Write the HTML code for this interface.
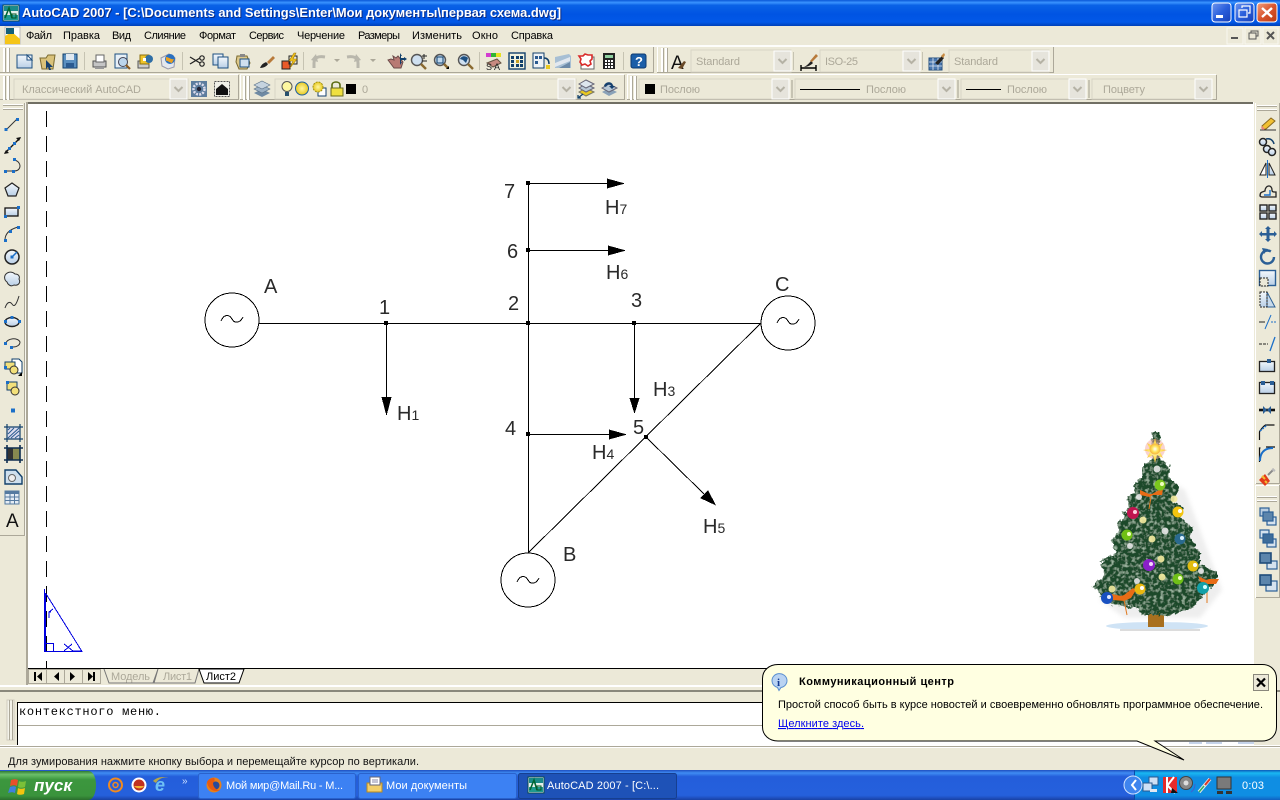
<!DOCTYPE html>
<html lang="ru">
<head>
<meta charset="utf-8">
<title>AutoCAD 2007</title>
<style>
html,body{margin:0;padding:0;width:1280px;height:800px;overflow:hidden;background:#ece9d8}
svg{display:block;position:absolute;left:0;top:0}
text{font-family:"Liberation Sans","DejaVu Sans",sans-serif;font-size:11px}
.g{fill:#aca899}
.m{fill:#000}
.d{font-size:20px;fill:#2a2a2a}
.d tspan{font-size:14px}
</style>
</head>
<body>
<svg width="1280" height="800" viewBox="0 0 1280 800" xmlns="http://www.w3.org/2000/svg">
<defs>
<linearGradient id="title" x1="0" y1="0" x2="0" y2="1">
<stop offset="0" stop-color="#0a58d8"/><stop offset=".1" stop-color="#3a93ff"/><stop offset=".2" stop-color="#0a62e6"/><stop offset=".55" stop-color="#0054e3"/><stop offset=".85" stop-color="#0258e8"/><stop offset="1" stop-color="#0040b8"/>
</linearGradient>
<linearGradient id="task" x1="0" y1="0" x2="0" y2="1">
<stop offset="0" stop-color="#1f4fc0"/><stop offset=".1" stop-color="#3f8cf3"/><stop offset=".22" stop-color="#245edb"/><stop offset=".85" stop-color="#2560dc"/><stop offset="1" stop-color="#1941a5"/>
</linearGradient>
<linearGradient id="tray" x1="0" y1="0" x2="0" y2="1">
<stop offset="0" stop-color="#0c59b9"/><stop offset=".1" stop-color="#19b8f2"/><stop offset=".25" stop-color="#0f8ee3"/><stop offset=".85" stop-color="#0f8ee3"/><stop offset="1" stop-color="#1060c0"/>
</linearGradient>
<linearGradient id="start" x1="0" y1="0" x2="0" y2="1">
<stop offset="0" stop-color="#2f7a33"/><stop offset=".12" stop-color="#6cbf6a"/><stop offset=".3" stop-color="#3c973e"/><stop offset=".85" stop-color="#3a933c"/><stop offset="1" stop-color="#2a6e2c"/>
</linearGradient>
<linearGradient id="xb" x1="0" y1="0" x2="1" y2="1">
<stop offset="0" stop-color="#6f95ee"/><stop offset=".5" stop-color="#2a5fdc"/><stop offset="1" stop-color="#1640b8"/>
</linearGradient>
<linearGradient id="xc" x1="0" y1="0" x2="1" y2="1">
<stop offset="0" stop-color="#f0a080"/><stop offset=".5" stop-color="#d9552e"/><stop offset="1" stop-color="#b93a12"/>
</linearGradient>
<linearGradient id="ice" x1="0" y1="0" x2="0" y2="1">
<stop offset="0" stop-color="#f4f8fc"/><stop offset="1" stop-color="#b9cfe6"/>
</linearGradient>
<radialGradient id="gold"><stop offset="0" stop-color="#fff7a0"/><stop offset="1" stop-color="#e8c820"/></radialGradient>
<radialGradient id="starg"><stop offset="0" stop-color="#fff"/><stop offset=".55" stop-color="#ffe45a"/><stop offset="1" stop-color="#f6b040"/></radialGradient>
<filter id="tex" x="-8%" y="-8%" width="116%" height="116%">
<feTurbulence type="fractalNoise" baseFrequency=".28" numOctaves="2" seed="4" result="n"/>
<feDisplacementMap in="SourceGraphic" in2="n" scale="7" xChannelSelector="R" yChannelSelector="G" result="d"/>
<feColorMatrix in="n" type="matrix" values="0 0 0 0 .42  0 0 0 0 .58  0 0 0 0 .44  2.4 0 0 0 -1.15" result="c"/>
<feComposite in="c" in2="d" operator="in" result="t"/>
<feMerge><feMergeNode in="d"/><feMergeNode in="t"/></feMerge>
</filter>
<filter id="bl"><feGaussianBlur stdDeviation="2"/></filter>
<g id="hv"><rect x="0" y="0" width="2" height="24" fill="#fff"/><rect x="2" y="0" width="1" height="24" fill="#aca899"/><rect x="4" y="0" width="2" height="24" fill="#fff"/><rect x="6" y="0" width="1" height="24" fill="#aca899"/></g>
<g id="hh"><rect x="0" y="0" width="20" height="1" fill="#fff"/><rect x="0" y="1" width="20" height="1" fill="#aca899"/><rect x="0" y="4" width="20" height="1" fill="#fff"/><rect x="0" y="5" width="20" height="1" fill="#aca899"/></g>
<g id="cb"><rect x="0" y="0" width="17" height="20" fill="#e6e4dc" stroke="#fff"/><path d="M4.500 8l4 4 4-4" fill="none" stroke="#b5b2a5" stroke-width="2"/></g>
</defs>

<!-- Title bar -->
<rect x="0" y="0" width="1280" height="26" fill="url(#title)"/>
<g transform="translate(3,5)">
<rect width="16" height="16" fill="#e4f0ec" stroke="#0a4a50"/><rect x="1" y="1" width="14" height="5" fill="#1a8a88"/><rect x="1" y="10" width="14" height="5" fill="#1f9a8f"/>
<path d="M2 13L6 3l3 10" fill="none" stroke="#063" stroke-width="1.600"/><rect x="9" y="9" width="4" height="4" fill="none" stroke="#052"/>
</g>
<text x="23" y="18" textLength="539" lengthAdjust="spacingAndGlyphs" font-weight="700" style="font-size:13px" fill="#0a2a80">AutoCAD 2007 - [C:\Documents and Settings\Enter\Мои документы\первая схема.dwg]</text>
<text x="22" y="17" textLength="539" lengthAdjust="spacingAndGlyphs" font-weight="700" style="font-size:13px" fill="#fff">AutoCAD 2007 - [C:\Documents and Settings\Enter\Мои документы\первая схема.dwg]</text>
<rect x="1212" y="3" width="19" height="19" rx="3" fill="url(#xb)" stroke="#fff"/><rect x="1216" y="15" width="7" height="3" fill="#fff"/>
<rect x="1235" y="3" width="19" height="19" rx="3" fill="url(#xb)" stroke="#fff"/><rect x="1239" y="10" width="8" height="7" fill="none" stroke="#fff" stroke-width="1.200"/><path d="M1242 8V6h8v7h-2" fill="none" stroke="#fff" stroke-width="1.200"/>
<rect x="1257" y="3" width="20" height="19" rx="3" fill="url(#xc)" stroke="#fff"/><path d="M1262 8l10 9M1272 8l-10 9" stroke="#fff" stroke-width="2.400"/>

<!-- Menu -->
<rect x="0" y="26" width="1280" height="19" fill="#ece9d8"/>
<g transform="translate(4,26)">
<rect x="1" y="1" width="15" height="17" fill="#fff" stroke="#bbb"/><path d="M1 18V10L8 6l8 7v5z" fill="#f5c518"/><rect x="2" y="2" width="8" height="6" fill="#14607a"/>
</g>
<g class="m">
<text x="26" y="39" textLength="26" class="m">Файл</text>
<text x="63" y="39" textLength="37" class="m">Правка</text>
<text x="112" y="39" textLength="19" class="m">Вид</text>
<text x="144" y="39" textLength="42" class="m">Слияние</text>
<text x="199" y="39" textLength="37" class="m">Формат</text>
<text x="249" y="39" textLength="35" class="m">Сервис</text>
<text x="297" y="39" textLength="48" class="m">Черчение</text>
<text x="358" y="39" textLength="42" class="m">Размеры</text>
<text x="412" y="39" textLength="50" class="m">Изменить</text>
<text x="472" y="39" textLength="26" class="m">Окно</text>
<text x="511" y="39" textLength="42" class="m">Справка</text>
</g>
<rect x="1227" y="28" width="16" height="16" fill="#ece9d8" stroke="#f8f7f0"/><rect x="1231" y="37" width="7" height="2" fill="#555"/>
<rect x="1245" y="28" width="16" height="16" fill="#ece9d8" stroke="#f8f7f0"/><rect x="1249" y="33" width="7" height="6" fill="none" stroke="#555"/><path d="M1251 33v-2h7v5h-2" fill="none" stroke="#555"/>
<rect x="1263" y="28" width="15" height="16" fill="#ece9d8" stroke="#f8f7f0"/><path d="M1267 32l7 7M1274 32l-7 7" stroke="#555" stroke-width="2"/>
<rect x="0" y="45" width="1280" height="2" fill="#fdfdfb"/>

<!-- Toolbar edges -->
<g fill="none" stroke="#aca899">
<path d="M0 72.500H653.500V47"/>
<path d="M657 72.500H1053.500V47"/>
<path d="M0 99.500H238.500V75"/>
<path d="M240 99.500H624.500V75"/>
<path d="M627 99.500H1216.500V75"/>
</g>
<g fill="#fff">
<rect x="0" y="74" width="238" height="1"/><rect x="240" y="74" width="384" height="1"/><rect x="627" y="74" width="589" height="1"/>
<rect x="657" y="47" width="1" height="25"/><rect x="240" y="74" width="1" height="25"/><rect x="627" y="74" width="1" height="25"/>
</g>
<use href="#hv" x="3" y="48"/>
<use href="#hv" x="661" y="48"/>
<use href="#hv" x="3" y="76"/>
<use href="#hv" x="243" y="76"/>
<use href="#hv" x="630" y="76"/>
<g fill="#c6c3b2">
<rect x="84" y="52" width="1" height="18"/><rect x="182" y="52" width="1" height="18"/><rect x="303" y="52" width="1" height="18"/><rect x="479" y="52" width="1" height="18"/><rect x="623" y="52" width="1" height="18"/><rect x="793" y="52" width="1" height="18"/><rect x="922" y="52" width="1" height="18"/>
<rect x="791" y="80" width="2" height="18"/><rect x="957" y="80" width="2" height="18"/><rect x="1088" y="80" width="2" height="18"/>
</g>

<!-- Row 1 icons -->
<rect x="17" y="55" width="15" height="13" fill="url(#ice)" stroke="#1d4f80"/><path d="M27 55l5 5h-5z" fill="#fff" stroke="#1d4f80"/>
<g transform="translate(40,53)"><path d="M0 5h6l2-3h7l-2 14H2z" fill="#d9c27a" stroke="#7a6a30"/><path d="M6 7l7 7-3 0 1 3-2 0-1-3-2 2z" fill="#16406e"/></g>
<rect x="63" y="54" width="14" height="14" fill="#5a8fc0" stroke="#12406b"/><rect x="66" y="54" width="8" height="6" fill="#dfe8f0"/><rect x="66" y="63" width="8" height="5" fill="#2a5a90"/>
<g transform="translate(92,54)"><rect x="1" y="7" width="13" height="6" fill="#c5c5c5" stroke="#555"/><rect x="4" y="1" width="8" height="7" fill="#fff" stroke="#666"/><path d="M3 13h9v2H3z" fill="#999"/></g>
<g transform="translate(114,53)"><rect x="1" y="1" width="12" height="14" fill="#e7f0f7" stroke="#1d4f80"/><circle cx="9" cy="9" r="4.500" fill="#bcd5ec" stroke="#445"/><path d="M12 12l4 4" stroke="#8a5a20" stroke-width="2.200"/></g>
<g transform="translate(137,53)"><rect x="1" y="8" width="11" height="7" fill="#ccc" stroke="#555"/><rect x="3" y="2" width="9" height="9" fill="#f0c52a" stroke="#8a7010"/><circle cx="12" cy="6" r="4" fill="#2f6ea6"/><rect x="6" y="5" width="3" height="3" fill="#fff"/></g>
<g transform="translate(160,53)"><path d="M1 5l8-4 6 4-1 9-6 2-6-3z" fill="#e4e8ee" stroke="#99a"/><circle cx="10" cy="6" r="5" fill="#2a70c0"/><path d="M6 4c3 0 5 3 8 2l-2 4c-2 0-5-3-6-2z" fill="#e9a020"/></g>
<g transform="translate(189,54)" stroke="#222" fill="none"><path d="M1 3l10 6M1 10l10-6" stroke-width="1.300"/><circle cx="13" cy="4" r="2.200" stroke-width="1.200"/><circle cx="13" cy="10" r="2.200" stroke-width="1.200"/></g>
<rect x="213" y="54" width="10" height="11" fill="url(#ice)" stroke="#1d4f80"/><rect x="218" y="57" width="10" height="11" fill="url(#ice)" stroke="#1d4f80"/>
<g transform="translate(235,53)"><path d="M2 3h10l3 7-3 6H4L1 9z" fill="#ddc88a" stroke="#7a6a30"/><rect x="5" y="6" width="9" height="8" fill="#cfe0ee" stroke="#1d4f80"/><rect x="5" y="1" width="5" height="3" fill="#888"/></g>
<g transform="translate(259,54)"><path d="M1 14c2-5 5-5 6-6l2 2c-1 2-4 4-8 4z" fill="#222"/><path d="M8 8l6-6 2 2-6 6z" fill="#b87a3a"/></g>
<g transform="translate(281,53)"><rect x="1" y="8" width="8" height="8" fill="#e95a2a" stroke="#222"/><rect x="8" y="3" width="8" height="8" fill="none" stroke="#222"/><path d="M13 0l-5 8h4l-3 7 7-9h-4l3-6z" fill="#f2c419" stroke="#a07a10" stroke-width=".600"/></g>
<g fill="none" stroke="#b9b7ac" stroke-width="3"><path d="M314 68v-5c0-6 5-7 11-6"/><path d="M358 68v-5c0-6-5-7-11-6"/></g>
<path d="M311 60l5-6 2 8zM361 60l-5-6-2 8z" fill="#b9b7ac"/>
<path d="M334 59h6l-3 3zM370 59h6l-3 3z" fill="#aca899"/>
<g transform="translate(387,53)"><path d="M1 7l6 8h7l2-6-5-6-2 2-3-2 1 4-3-1z" fill="#b87a74" stroke="#6a4a48"/><path d="M13 0l2 3h-1v2h3v-1l3 2-3 2v-1h-3v2h1l-2 3" fill="#12406b"/></g>
<g transform="translate(410,53)"><circle cx="7" cy="7" r="5.500" fill="#cfe0f0" stroke="#555" stroke-width="1.400"/><path d="M11 11l5 5" stroke="#8a6a30" stroke-width="2.400"/><path d="M14 1v5M12 3h5M12 8h5" stroke="#222"/></g>
<g transform="translate(433,53)"><circle cx="7" cy="7" r="5.500" fill="#bfd7ec" stroke="#555" stroke-width="1.400"/><rect x="4" y="4" width="6" height="6" fill="none" stroke="#12406b"/><path d="M11 11l4 4" stroke="#8a6a30" stroke-width="2.400"/><path d="M13 16h3v-3z" fill="#000"/></g>
<g transform="translate(457,53)"><circle cx="7" cy="7" r="5.500" fill="#cfe0f0" stroke="#555" stroke-width="1.400"/><path d="M3 6c2-4 6-3 8-1l-2 5-3-3z" fill="#1d4f80"/><path d="M11 11l5 5" stroke="#8a6a30" stroke-width="2.400"/></g>
<g transform="translate(486,53)"><rect x="0" y="0" width="15" height="4" fill="#d33cd0"/><rect x="5" y="0" width="5" height="4" fill="#2fb534"/><rect x="10" y="0" width="5" height="4" fill="#e6e020"/><path d="M1 10l10-4 4 4-8 4z" fill="#c88a80" stroke="#654"/><text x="0" y="17" style="font-size:9px" fill="#222">S</text><text x="8" y="17" style="font-size:9px" fill="#222">A</text></g>
<rect x="509" y="53" width="16" height="16" fill="#f2f2de" stroke="#12406b" stroke-width="1.400"/><g fill="#12406b"><rect x="511" y="56" width="3" height="3"/><rect x="516" y="56" width="3" height="3"/><rect x="520" y="56" width="3" height="3"/><rect x="511" y="60" width="3" height="3"/><rect x="516" y="60" width="3" height="3" fill="#c8a020"/><rect x="520" y="60" width="3" height="3"/><rect x="511" y="64" width="3" height="3"/><rect x="516" y="64" width="3" height="3"/><rect x="520" y="64" width="3" height="3"/></g>
<g transform="translate(532,53)"><rect x="1" y="0" width="11" height="15" fill="#eef2f6" stroke="#12406b"/><g fill="#2a5a90"><rect x="3" y="3" width="3" height="3"/><rect x="3" y="8" width="3" height="3"/><rect x="7" y="3" width="3" height="3"/></g><path d="M12 5c4 0 5 3 5 6" fill="none" stroke="#12406b" stroke-width="1.500"/><rect x="14" y="12" width="4" height="4" fill="#e8c820"/></g>
<g transform="translate(555,54)"><path d="M0 3l14-3 2 2v12H0z" fill="#a7bfd4"/><path d="M0 9l15-6v4L0 13z" fill="#e2e8ef"/><path d="M4 14l11-6v6z" fill="#6d8aa8"/></g>
<g transform="translate(578,53)"><rect x="3" y="4" width="13" height="12" fill="#fff" stroke="#666"/><path d="M1 3h4l2-2 3 1 4 0 0 4-2 2 1 3-3 2-3-2-3 1-2-3 1-3z" fill="#fff" stroke="#d92a2a" stroke-width="1.600"/></g>
<g transform="translate(603,53)"><rect x="0" y="0" width="12" height="16" fill="#222"/><rect x="2" y="2" width="8" height="3" fill="#8fd0a0"/><g fill="#fff"><rect x="2" y="7" width="2" height="2"/><rect x="5" y="7" width="2" height="2"/><rect x="8" y="7" width="2" height="2"/><rect x="2" y="10" width="2" height="2"/><rect x="5" y="10" width="2" height="2"/><rect x="8" y="10" width="2" height="2"/><rect x="2" y="13" width="2" height="2"/><rect x="5" y="13" width="2" height="2"/><rect x="8" y="13" width="2" height="2"/></g></g>
<rect x="631" y="54" width="15" height="14" rx="2" fill="#1b5ea8" stroke="#0e3a70"/><text x="635" y="66" font-weight="700" style="font-size:13px" fill="#fff">?</text>
<text x="671" y="69" style="font-size:19px" fill="#111">A</text><path d="M678 68l6-7 2 1-4 7z" fill="#6a4a28"/>
<g transform="translate(800,53)"><path d="M1 15h15M1 12v6M16 12v6" stroke="#000" stroke-width="1.400"/><path d="M4 14c4-2 6-5 7-6l2 2c-2 2-5 4-9 4z" fill="#222"/><path d="M10 8l6-7 2 2-6 6z" fill="#b87a3a"/></g>
<g transform="translate(929,53)"><rect x="0" y="5" width="13" height="12" fill="#4a78b0" stroke="#26507e"/><path d="M0 9h13M0 13h13M4 5v12M9 5v12" stroke="#dfe8f2" stroke-width=".800"/><path d="M6 10l7-7 2 2-6 7z" fill="#222"/><path d="M12 3l3-3 1 2-2 3z" fill="#c88a40"/></g>

<!-- Row 1 combos -->
<rect x="691" y="50" width="100" height="22" fill="#ece9d8" stroke="#d8d5c6"/>
<text x="696" y="65" textLength="44" class="g">Standard</text>
<use href="#cb" x="774" y="51"/>
<rect x="820" y="50" width="100" height="22" fill="#ece9d8" stroke="#d8d5c6"/>
<text x="825" y="65" textLength="33" class="g">ISO-25</text>
<use href="#cb" x="903" y="51"/>
<rect x="949" y="50" width="100" height="22" fill="#ece9d8" stroke="#d8d5c6"/>
<text x="954" y="65" textLength="44" class="g">Standard</text>
<use href="#cb" x="1032" y="51"/>

<!-- Row 2 -->
<rect x="14" y="79" width="174" height="20" fill="#ece9d8" stroke="#d8d5c6"/>
<text x="22" y="93" textLength="119" class="g">Классический AutoCAD</text>
<use href="#cb" x="170" y="79"/>
<g transform="translate(191,81)"><rect width="16" height="16" fill="#5d7d9e"/><circle cx="8" cy="8" r="5.500" fill="none" stroke="#dde" stroke-width="2.500" stroke-dasharray="2 1.200"/><circle cx="8" cy="8" r="2.200" fill="#223"/></g>
<g transform="translate(214,81)"><rect x=".500" y=".500" width="15" height="15" fill="#f0f0e8" stroke="#555" stroke-dasharray="2 1"/><path d="M2 8l6-5 6 5v6H2z" fill="#111"/></g>
<g transform="translate(254,81)"><path d="M0 12l8-4 8 4-8 4z" fill="#6f8aa3"/><path d="M0 8l8-4 8 4-8 4z" fill="#9cb1c4" stroke="#5b7288" stroke-width=".600"/><path d="M0 4l8-4 8 4-8 4z" fill="#c5d3df" stroke="#5b7288" stroke-width=".600"/></g>
<rect x="275" y="79" width="301" height="20" fill="#ece9d8" stroke="#d8d5c6"/>
<g transform="translate(281,80)"><circle cx="6" cy="6.500" r="5" fill="#fdf7a0" stroke="#555"/><rect x="4" y="12" width="4" height="4" fill="#28506e"/></g>
<circle cx="302" cy="88.500" r="6.500" fill="url(#gold)" stroke="#1d5fa0"/>
<g transform="translate(312,81)"><rect x="6" y="7" width="8" height="8" fill="#fff" stroke="#16406e"/><circle cx="6" cy="6" r="5" fill="url(#gold)" stroke="#a09010" stroke-dasharray="2 1"/></g>
<g transform="translate(330,81)"><path d="M2 7V4c0-4 8-4 8 0v3" fill="none" stroke="#5a6a10" stroke-width="1.600"/><rect x="1" y="7" width="12" height="8" fill="#f0e040" stroke="#6a6a20"/></g>
<rect x="346" y="84" width="10" height="10" fill="#000"/>
<text x="362" y="93" class="g">0</text>
<use href="#cb" x="558" y="79"/>
<g transform="translate(577,80)"><path d="M2 12l7-4 8 4-8 4z" fill="#e8c820" stroke="#776"/><path d="M2 8l7-4 8 4-8 4z" fill="#b8c8d6" stroke="#667"/><path d="M2 4l7-4 8 4-8 4z" fill="#dde6ee" stroke="#667"/><path d="M1 18l5-4M1 15v3h3" stroke="#12406b" fill="none" stroke-width="1.300"/></g>
<g transform="translate(601,80)"><path d="M1 12l7-4 8 4-8 4z" fill="#8aa2b8"/><path d="M1 8l7-4 8 4-8 4z" fill="#b8c8d6" stroke="#667"/><path d="M3 6c1-5 9-5 9 0l2 0-3 3-3-3h2c0-2-4-2-5 1z" fill="#16406e"/></g>

<rect x="639" y="79" width="150" height="20" fill="#ece9d8" stroke="#d8d5c6"/>
<rect x="645" y="84" width="10" height="10" fill="#000"/>
<text x="660" y="93" textLength="40" class="g">Послою</text>
<use href="#cb" x="772" y="79"/>
<rect x="795" y="79" width="160" height="20" fill="#ece9d8" stroke="#d8d5c6"/>
<rect x="800" y="89" width="60" height="1" fill="#000"/>
<text x="866" y="93" textLength="40" class="g">Послою</text>
<use href="#cb" x="938" y="79"/>
<rect x="961" y="79" width="125" height="20" fill="#ece9d8" stroke="#d8d5c6"/>
<rect x="966" y="89" width="35" height="1" fill="#000"/>
<text x="1007" y="93" textLength="40" class="g">Послою</text>
<use href="#cb" x="1069" y="79"/>
<rect x="1092" y="79" width="120" height="20" fill="#ece9d8" stroke="#d8d5c6"/>
<text x="1103" y="93" textLength="42" class="g">Поцвету</text>
<use href="#cb" x="1195" y="79"/>

<!-- Main area frame -->
<rect x="27" y="102" width="1227" height="2" fill="#716f64"/>
<rect x="26" y="102" width="2" height="584" fill="#aca899"/>
<rect x="1253" y="102" width="1" height="584" fill="#fff"/>
<rect x="28" y="104" width="1225" height="564" fill="#fff"/>
<rect x="28" y="668" width="1225" height="1" fill="#000"/>

<!-- Drawing -->
<rect x="46" y="111" width="1" height="16" fill="#000"/>
<line x1="46.500" y1="111" x2="46.500" y2="668" stroke="#000" stroke-width="1" stroke-dasharray="16 9" shape-rendering="crispEdges"/>
<g fill="none" stroke="#0000e0" stroke-width="1" shape-rendering="crispEdges">
<path d="M44.500 589V651.500H82L45.500 593"/><path d="M45.500 593V651"/><path d="M45.500 643.500h8V651"/>
<path d="M64 644l9 7M64 651l8-7M73 651h9"/>
<path d="M49 618v-6h2M49 612l4-3"/>
</g>

<g fill="none" stroke="#000" stroke-width="1" shape-rendering="crispEdges">
<circle cx="232" cy="320" r="27"/>
<circle cx="788" cy="323" r="27"/>
<circle cx="528" cy="580" r="27"/>
<path d="M221 321c3-7 8-7 11-2 3 5 8 4 11-2"/>
<path d="M777 323c3-7 8-7 11-2 3 5 8 4 11-2"/>
<path d="M517 582c3-7 8-7 11-2 3 5 8 4 11-2"/>
<path d="M259 323.500H761"/>
<path d="M528.500 183V553"/>
<path d="M528 183.500H610"/>
<path d="M528 250.500H610"/>
<path d="M386.500 323V400"/>
<path d="M634.500 323V400"/>
<path d="M528 434.500H612"/>
<path d="M528 553L761 323"/>
<path d="M646 437L704 494"/>
</g>
<g fill="#000" shape-rendering="crispEdges">
<path d="M607 178.500L625 183.500 607 188.500z"/>
<path d="M608 245.500L626 250.500 608 255.500z"/>
<path d="M381.500 397L386.500 416 391.500 397z"/>
<path d="M629.500 398L634.500 414 639.500 398z"/>
<path d="M609 429.500L627 434.500 609 439.500z"/>
<path d="M700 498L716 505.500 708 490z"/>
<rect x="526" y="181" width="4" height="4"/>
<rect x="526" y="248" width="4" height="4"/>
<rect x="384" y="321" width="4" height="4"/>
<rect x="526" y="321" width="4" height="4"/>
<rect x="632" y="321" width="4" height="4"/>
<rect x="526" y="432" width="4" height="4"/>
<rect x="644" y="435" width="4" height="4"/>
</g>
<g>
<text class="d" x="264" y="293">A</text>
<text class="d" x="379" y="314">1</text>
<text class="d" x="508" y="310">2</text>
<text class="d" x="631" y="307">3</text>
<text class="d" x="504" y="198">7</text>
<text class="d" x="507" y="258">6</text>
<text class="d" x="505" y="435">4</text>
<text class="d" x="633" y="434">5</text>
<text class="d" x="563" y="561">B</text>
<text class="d" x="775" y="291">C</text>
<text class="d" x="397" y="420">H<tspan>1</tspan></text>
<text class="d" x="605" y="214">H<tspan>7</tspan></text>
<text class="d" x="606" y="279">H<tspan>6</tspan></text>
<text class="d" x="653" y="396">H<tspan>3</tspan></text>
<text class="d" x="592" y="459">H<tspan>4</tspan></text>
<text class="d" x="703" y="533">H<tspan>5</tspan></text>
</g>

<!-- Christmas tree -->
<g>
<path d="M1150 470L1185 490 1200 530 1222 590 1200 618 1125 618 1100 600z" fill="#c8c8c8" opacity=".3" filter="url(#bl)"/>
<ellipse cx="1157" cy="626" rx="51" ry="4" fill="#cfe3f5"/>
<rect x="1120" y="629" width="80" height="2" fill="#dcdcdc"/>
<rect x="1148" y="612" width="16" height="15" fill="#a8701f"/>
<path filter="url(#tex)" fill="#1e4a2b" d="M1152 432L1160 432 1159 458 1170 467 1170 478 1180 488 1173 502 1183 508 1180 518 1193 528 1190 538 1200 552 1200 565 1217 572 1217 582 1203 595 1193 608 1170 615 1143 615 1137 608 1113 605 1100 595 1093 585 1105 575 1100 562 1115 553 1112 540 1120 532 1117 522 1125 520 1123 513 1130 507 1127 497 1135 493 1133 485 1142 477 1142 467 1153 458z"/>
<path d="M1140 490l9 4 3 0 9-5 2 0-1 6-9-0-3 2-10-2zM1198 576l8 4 3-1 10 0-3 5-8-0-3 1-5-4zM1112 594l9 2 3-1 9-7 3 2-5 8-7 3-11-1z" fill="#e86c16"/>
<path d="M1151 497l-2 12M1207 585l0 18M1124 600l3 15" stroke="#e07a20" fill="none"/>
<g>
<circle cx="1160" cy="485" r="5.500" fill="#7ac61e"/><circle cx="1162" cy="484" r="2" fill="#efffc0"/>
<circle cx="1133" cy="513" r="6" fill="#c0144f"/><circle cx="1135" cy="512" r="2" fill="#ffd0e0"/>
<circle cx="1178" cy="512" r="5.500" fill="#f2c40f"/><circle cx="1180" cy="511" r="2" fill="#fff"/>
<circle cx="1127" cy="535" r="5.500" fill="#70c014"/><circle cx="1129" cy="534" r="2" fill="#efffc0"/>
<circle cx="1180" cy="539" r="5.500" fill="#2a6a8e"/><circle cx="1182" cy="538" r="2" fill="#d8f0ff"/>
<circle cx="1149" cy="565" r="6" fill="#8a20c8"/><circle cx="1151" cy="564" r="2" fill="#f4d8ff"/>
<circle cx="1193" cy="566" r="5.500" fill="#e2bc10"/><circle cx="1195" cy="565" r="2" fill="#fff"/>
<circle cx="1178" cy="579" r="5.500" fill="#70c018"/><circle cx="1180" cy="578" r="2" fill="#efffc0"/>
<circle cx="1140" cy="589" r="5.500" fill="#e8b810"/><circle cx="1142" cy="588" r="2" fill="#fff"/>
<circle cx="1203" cy="588" r="6" fill="#14a0a8"/><circle cx="1205" cy="587" r="2" fill="#d0ffff"/>
<circle cx="1107" cy="598" r="6" fill="#1850c0"/><circle cx="1109" cy="597" r="2" fill="#dfeaff"/>
</g>
<g fill="#f5eca0" opacity=".9">
<circle cx="1157" cy="469" r="3.500" fill="#e8e8e8"/><circle cx="1139" cy="497" r="3" fill="#e8e8e8"/><circle cx="1174" cy="499" r="3.500"/><circle cx="1143" cy="520" r="3.500"/><circle cx="1165" cy="531" r="3.500" fill="#e8e8e8"/><circle cx="1152" cy="539" r="3.500"/><circle cx="1130" cy="546" r="3" fill="#e8e8e8"/><circle cx="1161" cy="559" r="3.500"/><circle cx="1201" cy="571" r="3" fill="#e8e8e8"/><circle cx="1162" cy="577" r="3.500"/><circle cx="1137" cy="581" r="3" fill="#e8e8e8"/><circle cx="1112" cy="589" r="3.500"/>
</g>
<circle cx="1155" cy="449" r="10" fill="#f4a8a0" opacity=".5"/>
<path d="M1155 438l2 8 6-3-3 6 7 1-7 2 3 6-6-3-2 8-2-8-6 3 3-6-7-2 7-1-3-6 6 3z" fill="url(#starg)"/>
<circle cx="1155" cy="449" r="5.500" fill="url(#starg)"/>
</g>

<!-- Left toolbar -->
<rect x="0" y="103" width="26" height="584" fill="#ece9d8"/>
<path d="M0 535.500H24.500V103" fill="none" stroke="#aca899"/>
<rect x="25" y="103" width="1" height="433" fill="#f8f7f0"/>
<use href="#hh" x="3" y="104"/>
<g fill="none" stroke="#333" stroke-width="1">
<path d="M6 130L17 119"/>
<path d="M5 153L20 138" stroke="#111" stroke-width="1.300"/>
<path d="M5 171h9c6 0 7-5 5-8-2-3-5-3-6-3"/>
<path d="M12 183l7 5-3 8H8l-3-8z" fill="url(#ice)" stroke="#222" stroke-width="1.200"/>
<rect x="5" y="208" width="13" height="8" fill="url(#ice)" stroke="#111" stroke-width="1.300"/>
<path d="M5 240c0-7 6-11 13-13"/>
<circle cx="12" cy="257" r="7" fill="url(#ice)" stroke="#222" stroke-width="1.500"/>
<path d="M6 274c3-3 7-2 9 0 4 0 5 3 4 5 2 4-1 7-5 6-3 2-6 0-7-3-3-2-3-6-1-8z" fill="url(#ice)"/>
<path d="M5 308c2-6 5-7 7-4s4 2 7-8"/>
<ellipse cx="12" cy="322" rx="7" ry="4.500" fill="url(#ice)" stroke="#222" stroke-width="1.400"/>
<path d="M6 344c0-6 12-7 14-2 0 3-3 5-7 5"/>
</g>
<g fill="#1b6fc8">
<rect x="4.500" y="128" width="3" height="3"/><rect x="16" y="118" width="3" height="3"/>
<rect x="8" y="147" width="3" height="3"/><rect x="13" y="142" width="3" height="3"/>
<rect x="4" y="170" width="3" height="3"/><rect x="12" y="170" width="3" height="3"/><rect x="13" y="158" width="3" height="3"/>
<rect x="4" y="215" width="3" height="3"/><rect x="17" y="206" width="3" height="3"/>
<rect x="4" y="239" width="3" height="3"/><rect x="17" y="226" width="3" height="3"/><rect x="9" y="230" width="3" height="3"/>
<rect x="10.500" y="255.500" width="3" height="3"/><path d="M12 257l5-5" stroke="#1b6fc8" stroke-width="1.500"/>
<rect x="10.500" y="316" width="3" height="3"/><rect x="4" y="320" width="3" height="3"/><rect x="18" y="320" width="3" height="3"/>
<rect x="4" y="342" width="3" height="3"/><rect x="10" y="346" width="3" height="3"/>
<rect x="11" y="408.500" width="4" height="4"/>
</g>
<path d="M4 154l5-1-3-3zM21 137l-5 1 3 3z" fill="#111"/>
<g transform="translate(4,358)"><path d="M8 1h7l3 3v11H8z" fill="#fff" stroke="#12406b"/><rect x="1" y="4" width="10" height="7" fill="#f3e07a" stroke="#12406b"/><circle cx="10" cy="12" r="4" fill="#f3e07a" stroke="#333"/><rect x="0" y="8" width="3" height="3" fill="#1b6fc8"/><path d="M14 18h4v-4z" fill="#000"/></g>
<g transform="translate(6,381)"><rect x="1" y="1" width="10" height="8" fill="#f3e07a" stroke="#12406b"/><circle cx="9" cy="10" r="4" fill="#f3e07a" stroke="#333"/><rect x="0" y="0" width="3" height="3" fill="#1b6fc8"/></g>
<g transform="translate(4,424)"><rect x="3" y="3" width="13" height="12" fill="#dde"/><path d="M4 14L15 4M7 14l8-7M4 10l6-6M11 14l4-3M4 6l2-2" stroke="#2a5a90"/><path d="M3 0v18M16 0v18M0 3h19M0 15h19" stroke="#12406b" stroke-width="1.200" fill="none"/></g>
<g transform="translate(4,445)"><rect x="3" y="3" width="13" height="12" fill="#888a50"/><rect x="3" y="3" width="6" height="12" fill="#333"/><path d="M3 0v18M16 0v18M0 3h19M0 15h19" stroke="#0e2e50" stroke-width="1.600" fill="none"/></g>
<g transform="translate(4,469)"><path d="M1 1h11l6 7v7H1z" fill="#cfe0ee" stroke="#12406b" stroke-width="1.400"/><circle cx="8" cy="9" r="3.500" fill="#eee" stroke="#666"/></g>
<g transform="translate(5,491)"><rect x="0" y="0" width="14" height="13" fill="#e4ecf4" stroke="#557aa0"/><rect x="0" y="0" width="14" height="3" fill="#557aa0"/><path d="M0 6h14M0 9.500h14M5 3v10M9.500 3v10" stroke="#557aa0"/></g>
<text x="6" y="527" style="font-size:19px" fill="#111">A</text>

<!-- Right toolbar -->
<rect x="1254" y="103" width="26" height="642" fill="#ece9d8"/>
<path d="M1255 483.500H1279.500V103" fill="none" stroke="#aca899"/>
<path d="M1255 597.500H1279.500V485" fill="none" stroke="#aca899"/>
<rect x="1255" y="103" width="1" height="381" fill="#fff"/>
<rect x="1255" y="485" width="24" height="1" fill="#fff"/>
<rect x="1255" y="485" width="1" height="113" fill="#fff"/>
<use href="#hh" x="1257" y="105"/>
<use href="#hh" x="1257" y="496"/>
<g transform="translate(1259,116)"><path d="M1 14h16" stroke="#333"/><path d="M3 10l9-8 4 3-9 8H4z" fill="#f1c033" stroke="#8a6a20"/><path d="M3 10l3 3-2 1-2-2z" fill="#e8857a"/></g>
<g transform="translate(1259,138)" fill="none"><circle cx="4" cy="4" r="3.500" fill="url(#ice)" stroke="#222" stroke-width="1.500"/><circle cx="8" cy="11" r="3.500" fill="url(#ice)" stroke="#222" stroke-width="1.500"/><circle cx="13" cy="14" r="3.500" fill="url(#ice)" stroke="#222" stroke-width="1.500"/><path d="M7 1c4-1 7 1 8 5" stroke="#12406b" stroke-width="1.500"/></g>
<g transform="translate(1259,160)"><path d="M1 15L7 3v12z" fill="#fff" stroke="#222"/><path d="M16 15L10 3v12z" fill="url(#ice)" stroke="#222"/><path d="M8.500 0v18" stroke="#1b6fc8"/></g>
<g transform="translate(1259,183)" fill="none"><path d="M1 13c0-4 2-4 5-5 0-6 7-7 7-1 0 2 1 2 4 2v5H3c-1 0-2-1-2-1z" stroke="#222" stroke-width="1.300"/><path d="M5 12h6V7" stroke="#1b6fc8" stroke-width="1.400"/></g>
<g transform="translate(1259,204)" fill="url(#ice)" stroke="#222" stroke-width="1.400"><rect x="1" y="1" width="7" height="6"/><rect x="10" y="1" width="7" height="6"/><rect x="1" y="9" width="7" height="6"/><rect x="10" y="9" width="7" height="6"/></g>
<g transform="translate(1259,226)"><path d="M8 0l3 3H9.500v4H14V5l3 3-3 3V9.500H9.500V13H11l-3 3-3-3h1.500V9.500H2V11l-3-3 3-3v2h4.500V3H5z" transform="translate(1,0)" fill="#2b5f96"/></g>
<g transform="translate(1259,248)" fill="none"><circle cx="8.500" cy="9" r="6.500" stroke="#2b5f96" stroke-width="2.400" stroke-dasharray="34 8"/><path d="M3 0l6 1-4 5z" fill="#2b5f96"/></g>
<g transform="translate(1259,270)"><rect x=".500" y=".500" width="16" height="15" fill="url(#ice)" stroke="#2b5f96" stroke-width="1.400"/><rect x="1" y="8" width="8" height="8" fill="#ece9d8" stroke="#222" stroke-dasharray="2 1"/></g>
<g transform="translate(1259,292)"><path d="M1 0h7l8 15H1z" fill="url(#ice)"/><path d="M8 0l8 15H8z" fill="#c7d9ea" stroke="#2b5f96"/><path d="M1 0v15h7V0z" fill="none" stroke="#222" stroke-dasharray="2 1"/></g>
<g fill="none"><path d="M1259 322h6" stroke="#222"/><path d="M1265 329l6-14" stroke="#1b6fc8"/><path d="M1271 322h6" stroke="#1b6fc8" stroke-dasharray="2 1"/>
<path d="M1259 344h9" stroke="#222" stroke-dasharray="3 1"/><path d="M1270 351l5-14" stroke="#1b6fc8" stroke-width="1.300"/>
<rect x="1259.500" y="361.500" width="15" height="10" fill="url(#ice)" stroke="#222" stroke-width="1.300"/>
<rect x="1259.500" y="382.500" width="15" height="11" fill="url(#ice)" stroke="#222" stroke-width="1.300"/></g>
<g fill="#2b5f96"><rect x="1267" y="359" width="4" height="4"/><rect x="1261" y="381" width="4" height="4"/><rect x="1270" y="381" width="4" height="4"/></g>
<path d="M1259 410h16" stroke="#111" stroke-width="2.600"/><path d="M1263 406l4 4-4 4zM1271 406l-4 4 4 4z" fill="#2b5f96"/>
<path d="M1259.500 440v-8c0-1 4-6 6-7h9" fill="none" stroke="#111" stroke-width="1.200"/><path d="M1260 431l7-6" stroke="#1b6fc8" stroke-width="1.500" stroke-dasharray="2 1"/>
<path d="M1259.500 462v-14h1M1266 447h9" fill="none" stroke="#111" stroke-width="1.200"/><path d="M1260 461c0-8 4-13 13-13" fill="none" stroke="#1b6fc8" stroke-width="2"/>
<g transform="translate(1259,468)"><path d="M0 12l6-6 5 7-5 5z" fill="#e33a1a"/><path d="M3 8l3 3M6 13l2 2" stroke="#f1c033" stroke-width="2"/><path d="M9 7l6-6" stroke="#8a8a8a" stroke-width="2"/><path d="M13 1l3 2" stroke="#bbb" stroke-width="2"/></g>
<g stroke="#2b5f96" stroke-width="1.200">
<rect x="1260" y="508" width="9" height="8" fill="#b9cde0"/><rect x="1267" y="517" width="9" height="8" fill="#d5e2ee"/><rect x="1263" y="512" width="10" height="9" fill="#5c85ac"/>
<rect x="1260" y="530" width="9" height="8" fill="#d5e2ee"/><rect x="1267" y="539" width="9" height="8" fill="#d5e2ee"/><rect x="1263" y="534" width="10" height="9" fill="#3d6c9a"/>
<rect x="1267" y="561" width="10" height="8" fill="#d5e2ee"/><rect x="1260" y="553" width="11" height="10" fill="#5c85ac" stroke="#1f4c7a" stroke-width="1.600"/>
<rect x="1266" y="581" width="11" height="10" fill="#d5e2ee"/><rect x="1260" y="575" width="11" height="10" fill="#5c85ac" stroke="#1f4c7a" stroke-width="1.600"/>
</g>

<!-- Sheet tabs -->
<rect x="28" y="669" width="1225" height="16" fill="#ece9d8"/>
<rect x="28.500" y="669.500" width="72" height="14" fill="#ece9d8" stroke="#aca899"/>
<path d="M46.500 670v14M64.500 670v14M82.500 670v14" stroke="#aca899"/>
<g fill="#000"><rect x="34" y="672" width="2" height="9"/><path d="M42 672v9l-5-4.500zM59 672v9l-5-4.500zM70 672v9l5-4.500zM88 672v9l5-4.500z"/><rect x="93" y="672" width="2" height="9"/></g>
<path d="M104 669l5 14h44l5-14" fill="#ece9d8" stroke="#777"/>
<path d="M158 669l-4 14h36l5 0 4-14" fill="#ece9d8" stroke="#777"/>
<path d="M199 669l5 14h35l5-14z" fill="#fff" stroke="#000"/>
<text x="111" y="680" textLength="39" class="g">Модель</text>
<text x="163" y="680" textLength="29" class="g">Лист1</text>
<text x="206" y="680" textLength="30" fill="#000">Лист2</text>

<!-- Separator strip -->
<rect x="0" y="685" width="1254" height="2" fill="#fff"/>
<rect x="0" y="687" width="1280" height="3" fill="#ece9d8"/>
<rect x="0" y="690" width="1280" height="2" fill="#8a887c"/>
<rect x="0" y="692" width="1280" height="10" fill="#ece9d8"/>
<!-- Command window -->
<rect x="7" y="700" width="7" height="40" fill="#f4f3ea" stroke="#cfccbe"/>
<rect x="9" y="700" width="1" height="40" fill="#aca899"/><rect x="12" y="700" width="1" height="40" fill="#aca899"/>
<rect x="17" y="702" width="1237" height="43" fill="#fff"/>
<rect x="17" y="702" width="1237" height="1" fill="#000"/>
<rect x="17" y="702" width="1" height="43" fill="#000"/>
<rect x="18" y="725" width="1236" height="1" fill="#aca899"/>
<rect x="1189" y="742" width="13" height="2" fill="#c6d4ea"/><rect x="1206" y="742" width="16" height="2" fill="#c6d4ea"/><rect x="1238" y="742" width="16" height="2" fill="#c6d4ea"/>
<text x="19" y="715" textLength="142" font-weight="400" style="font-family:'Liberation Mono',monospace;font-size:12px" fill="#000">контекстного меню.</text>
<rect x="0" y="745" width="1280" height="1" fill="#fff"/>
<rect x="0" y="746" width="1280" height="1" fill="#aca899"/>
<rect x="0" y="747" width="1280" height="1" fill="#fff"/>
<rect x="0" y="748" width="1280" height="22" fill="#ece9d8"/>
<text x="8" y="765" textLength="411" fill="#111">Для зумирования нажмите кнопку выбора и перемещайте курсор по вертикали.</text>

<!-- Taskbar -->
<rect x="0" y="770" width="1280" height="30" fill="url(#task)"/>
<path d="M0 771H88c6 0 8 8 8 14s-2 15-8 15H0z" fill="url(#start)"/>
<g transform="translate(11,778)"><path d="M0 2c3-1 5-1 7 0l-1 6c-2-1-4-1-7 0z" fill="#e8502a"/><path d="M8 3c2 1 4 1 7 0l-1 6c-3 1-5 1-7 0z" fill="#7ac038"/><path d="M-1 9c3-1 5-1 6 0l-1 6c-2-1-4-1-7 0z" fill="#3f80e0"/><path d="M7 10c2 1 4 1 7 0l-1 6c-3 1-5 1-7 0z" fill="#f2c40f"/></g>
<text x="34" y="791" textLength="38" lengthAdjust="spacingAndGlyphs" font-weight="700" font-style="italic" style="font-size:17px" fill="#fff">пуск</text>
<g fill="none"><circle cx="115.500" cy="785" r="6.500" stroke="#f08a20" stroke-width="2"/><circle cx="115.500" cy="785" r="2.500" stroke="#f08a20" stroke-width="1.500"/></g>
<circle cx="139" cy="785" r="7.500" fill="#fff"/><circle cx="139" cy="785" r="5.500" fill="#c03020"/><path d="M134 786h10c-1 3-8 3-10 0z" fill="#f2b030"/>
<text x="155" y="791" font-style="italic" font-weight="700" style="font-size:18px" fill="#6ec0f5">e</text>
<path d="M153 781c5-5 13-4 15-3-4-1-9 0-12 5z" fill="#f2c40f" opacity=".7"/>
<text x="182" y="784" style="font-size:10px" fill="#cfe0ff">»</text>

<rect x="198.500" y="773.500" width="157" height="25" rx="2" fill="#3c81f3" stroke="#2a62cc"/>
<rect x="358.500" y="773.500" width="158" height="25" rx="2" fill="#3c81f3" stroke="#2a62cc"/>
<rect x="518.500" y="773.500" width="158" height="25" rx="2" fill="#1e52b7" stroke="#163f90"/>
<circle cx="214" cy="785" r="7.500" fill="#e8801a"/><circle cx="215.500" cy="785.500" r="4" fill="#2a4a9a"/><path d="M207 782c1 7 7 11 13 8-5 0-7-4-7-7 2-2 2-4 1-5-4 0-6 2-7 4z" fill="#e85a10"/>
<text x="226" y="789" textLength="117" fill="#fff">Мой мир@Mail.Ru - М...</text>
<g transform="translate(367,777)"><path d="M0 6h15v9H0z" fill="#f2cf6a" stroke="#b88a20"/><rect x="3" y="0" width="10" height="8" fill="#fff" stroke="#667"/><path d="M5 3h6M5 5h6" stroke="#88a"/></g>
<text x="386" y="789" textLength="81" fill="#fff">Мои документы</text>
<g transform="translate(528,777)"><rect width="16" height="16" fill="#e4f0ec" stroke="#0a4a50"/><rect x="1" y="1" width="14" height="5" fill="#1a8a88"/><rect x="1" y="10" width="14" height="5" fill="#1f9a8f"/><path d="M2 13L6 3l3 10" fill="none" stroke="#063" stroke-width="1.600"/><rect x="9" y="9" width="4" height="4" fill="none" stroke="#052"/></g>
<text x="547" y="789" textLength="112" fill="#fff">AutoCAD 2007 - [C:\...</text>

<!-- Tray -->
<rect x="1134" y="770" width="146" height="30" fill="url(#tray)"/>
<rect x="1134" y="770" width="1" height="30" fill="#0a4aa8"/>
<circle cx="1133" cy="785" r="9" fill="#3e84ee" stroke="#cfe2ff"/><path d="M1136 780l-4 5 4 5" fill="none" stroke="#fff" stroke-width="2"/>
<g transform="translate(1143,777)"><rect x="6" y="0" width="9" height="8" fill="#cfe0f5" stroke="#2a5a90"/><rect x="0" y="6" width="9" height="8" fill="#cfe0f5" stroke="#2a5a90"/><rect x="7" y="12" width="7" height="3" fill="#e2e8f2"/></g>
<g transform="translate(1163,777)"><rect width="14" height="16" fill="#e62a2a"/><path d="M4 0v16M4 9l7-9M4 8l8 8" stroke="#fff" stroke-width="2" fill="none"/><path d="M9 11l6 5H8z" fill="#111"/></g>
<circle cx="1186" cy="783" r="6.500" fill="#888" stroke="#444"/><circle cx="1186" cy="783" r="2.500" fill="#ddd"/><path d="M1191 792c3-2 4-5 4-8" stroke="#4060d0" fill="none"/>
<path d="M1199 792l11-13" stroke="#e8e8e8" stroke-width="3.500"/><path d="M1205 785l5-6" stroke="#d83a2a" stroke-width="2"/><path d="M1199 792l5-6" stroke="#30b060" stroke-width="1.500"/>
<rect x="1217" y="777" width="14" height="12" fill="#7a7a7a" stroke="#333"/><rect x="1217" y="791" width="6" height="3" fill="#333"/><rect x="1226" y="791" width="6" height="3" fill="#333"/>
<text x="1242" y="789" textLength="22" fill="#fff">0:03</text>

<!-- Balloon -->
<path d="M778 664.500H1262c9 0 14.500 6 14.500 14V727c0 8-5.500 14-14.500 14H1155L1184 760 1137 741H778c-9 0-15.500-6-15.500-14V678.500c0-8 6.500-14 15.500-14z" fill="#ffffe1" stroke="#000" stroke-width="1"/>
<rect x="1253.500" y="674.500" width="15" height="16" fill="#ece9d8" stroke="#8a887c"/>
<path d="M1257 678.500l8 8M1265 678.500l-8 8" stroke="#000" stroke-width="2.200"/>
<path d="M772 681a7.500 7 0 1 1 9 6.500l-2 3-1.500-3a7.500 7 0 0 1-5.500-6.500z" fill="#b9d3f2" stroke="#5a8fd0"/>
<text x="777" y="686" font-weight="700" style="font-size:11px;font-family:'Liberation Serif',serif" fill="#123a90">i</text>
<text x="799" y="685" textLength="155" font-weight="700" fill="#000">Коммуникационный центр</text>
<text x="778" y="708" textLength="485" fill="#000">Простой способ быть в курсе новостей и своевременно обновлять программное обеспечение.</text>
<text x="778" y="727" textLength="86" fill="#0000ee" text-decoration="underline">Щелкните здесь.</text>
</svg>
</body>
</html>
